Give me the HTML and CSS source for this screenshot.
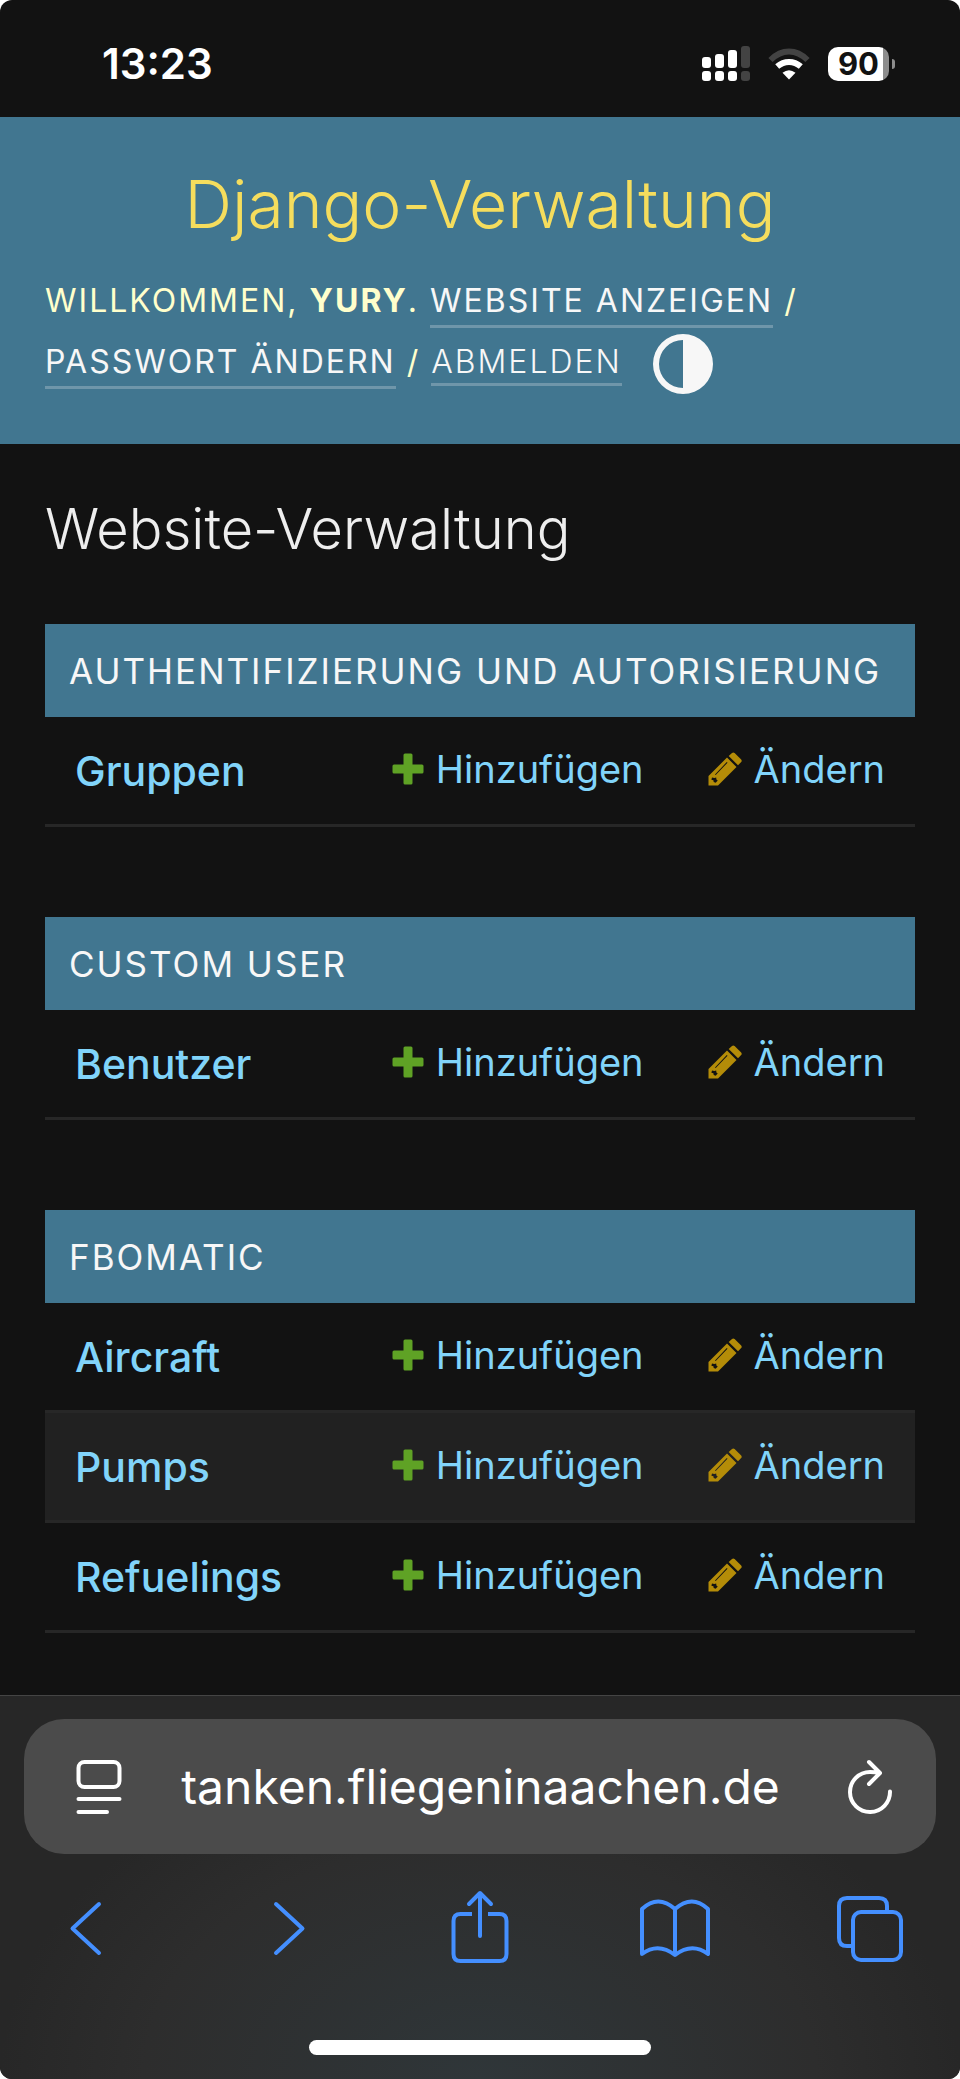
FILE: index.html
```html
<!DOCTYPE html>
<html lang="de">
<head>
<meta charset="utf-8">
<meta name="viewport" content="width=device-width, initial-scale=1">
<title>Website-Verwaltung | Django-Verwaltung</title>
<link rel="stylesheet" href="styles.css">
</head>
<body>
<svg class="sprite" aria-hidden="true">
  <symbol id="plus" viewBox="0 0 32 32">
    <path fill="#5fa225" d="M13 .5h6q1.500 0 1.500 1.500v9.500H30q1.500 0 1.500 1.500v6q0 1.500-1.500 1.500h-9.500V30q0 1.500-1.500 1.500h-6q-1.500 0-1.500-1.500v-9.500H2Q.5 20.500.5 19v-6q0-1.500 1.500-1.500h9.500V2Q11.500.5 13 .5z"/>
  </symbol>
  <symbol id="pencil" viewBox="0 0 34 34">
    <path fill="#b48c08" fill-rule="evenodd" d="M19 5.500l9.500 9.500L10 33.500H.5v-9.500zM18.800 10L7 22.400l.7.700L19.500 10.700zM4 25.400l-.6 2.400 2 .4.300 1.900 2 .6 2-2.200-1.300-.9-.2-2-1.900.4z"/>
    <path fill="#b48c08" d="M20.700 4L24 .9q1.300-1 2.600 0l6.600 6.600q1 1.300 0 2.600L30 13.300z"/>
  </symbol>
</svg>
<div class="phone">
  <div class="status">
    <time class="clock">13:23</time>
    <div class="indicators">
      <svg width="48" height="36" viewBox="0 0 48 36" role="img" aria-label="Signal">
        <g fill="#fff"><rect y="11" width="9" height="11" rx="3"/><rect x="13" y="8" width="9" height="14" rx="3"/><rect x="26" y="4" width="9" height="18" rx="3"/><rect y="25" width="9" height="10" rx="3"/><rect x="13" y="25" width="9" height="10" rx="3"/><rect x="26" y="25" width="9" height="10" rx="3"/></g>
        <g fill="#434343"><rect x="39" width="9" height="22" rx="3"/><rect x="39" y="25" width="9" height="10" rx="3"/></g>
      </svg>
      <svg class="wifi" width="42" height="32" viewBox="0 0 42 32" role="img" aria-label="WLAN">
        <path fill="none" stroke="#434343" stroke-width="6" d="M2.500 12Q11 3.500 21 3.500T39.500 12"/>
        <path fill="none" stroke="#fff" stroke-width="6" d="M9.200 18.600Q14.500 14 21 14t11.800 4.600"/>
        <path fill="#fff" d="M21 31.500l-6.500-6.700Q21 19.500 27.500 24.800z"/>
      </svg>
      <div class="battery"><span class="charge">90</span></div>
    </div>
  </div>

  <header class="header">
    <h1 class="site-name">Django-Verwaltung</h1>
    <div class="user-tools">
      Willkommen, <strong>Yury</strong>.
      <a href="#">Website anzeigen</a> /
      <a href="#">Passwort ändern</a> /
      <button class="logout" type="button">Abmelden</button>
      <button class="theme" type="button" aria-label="Farbschema wechseln">
        <svg width="60" height="60" viewBox="0 0 60 60"><path fill="#f7f7f7" fill-rule="evenodd" d="M30 0a30 30 0 0 1 0 60a30 30 0 0 1 0-60zM30 6a24 24 0 0 0 0 48z"/></svg>
      </button>
    </div>
  </header>

  <main class="content">
    <h2 class="page-title">Website-Verwaltung</h2>

    <table class="module">
      <caption>Authentifizierung und Autorisierung</caption>
      <tbody>
        <tr><th scope="row"><a href="#">Gruppen</a></th><td><a class="action" href="#"><svg class="plus"><use href="#plus"/></svg>Hinzufügen</a></td><td><a class="action" href="#"><svg class="pencil"><use href="#pencil"/></svg>Ändern</a></td></tr>
      </tbody>
    </table>

    <table class="module">
      <caption>Custom User</caption>
      <tbody>
        <tr><th scope="row"><a href="#">Benutzer</a></th><td><a class="action" href="#"><svg class="plus"><use href="#plus"/></svg>Hinzufügen</a></td><td><a class="action" href="#"><svg class="pencil"><use href="#pencil"/></svg>Ändern</a></td></tr>
      </tbody>
    </table>

    <table class="module">
      <caption>FBOmatic</caption>
      <tbody>
        <tr><th scope="row"><a href="#">Aircraft</a></th><td><a class="action" href="#"><svg class="plus"><use href="#plus"/></svg>Hinzufügen</a></td><td><a class="action" href="#"><svg class="pencil"><use href="#pencil"/></svg>Ändern</a></td></tr>
        <tr><th scope="row"><a href="#">Pumps</a></th><td><a class="action" href="#"><svg class="plus"><use href="#plus"/></svg>Hinzufügen</a></td><td><a class="action" href="#"><svg class="pencil"><use href="#pencil"/></svg>Ändern</a></td></tr>
        <tr><th scope="row"><a href="#">Refuelings</a></th><td><a class="action" href="#"><svg class="plus"><use href="#plus"/></svg>Hinzufügen</a></td><td><a class="action" href="#"><svg class="pencil"><use href="#pencil"/></svg>Ändern</a></td></tr>
      </tbody>
    </table>
  </main>

  <footer class="browser">
    <div class="address">
      <button class="icon" type="button" aria-label="Seitenmenü">
        <svg width="46" height="56" viewBox="0 0 46 56" fill="none" stroke="#fff" stroke-width="4" stroke-linecap="round"><rect x="2.500" y="3" width="41" height="25" rx="6"/><path d="M2.500 40h41M2.500 53H31"/></svg>
      </button>
      <button class="url" type="button">tanken.fliegeninaachen.de</button>
      <button class="icon" type="button" aria-label="Neu laden">
        <svg width="46" height="56" viewBox="0 0 46 56" fill="none" stroke="#fff" stroke-width="4" stroke-linecap="round" stroke-linejoin="round"><path d="M43 32.500A20 20 0 1 1 23 13q5 0 9 .8M22 3l11 11-11 11"/></svg>
      </button>
    </div>
    <nav class="toolbar" aria-label="Browser">
      <button class="icon" type="button" aria-label="Zurück"><svg width="72" height="74" viewBox="0 0 72 74"><path d="M50 14L23.500 38.500 50 63"/></svg></button>
      <button class="icon" type="button" aria-label="Vor"><svg width="72" height="74" viewBox="0 0 72 74"><path d="M31 14l26.500 24.500L31 63"/></svg></button>
      <button class="icon" type="button" aria-label="Teilen"><svg width="72" height="74" viewBox="0 0 72 74"><path stroke-linecap="butt" d="M30 24H18.500q-7 0-7 7v33q0 7 7 7h39q7 0 7-7V31q0-7-7-7H46"/><path d="M38 46V4M27 14L38 3l11 11"/></svg></button>
      <button class="icon" type="button" aria-label="Lesezeichen"><svg width="72" height="74" viewBox="0 0 72 74"><path d="M37 19v46M37 19Q20 4 4 19v45q16-12 33 1 17-13 33-1V19Q54 4 37 19z"/></svg></button>
      <button class="icon" type="button" aria-label="Tabs"><svg width="72" height="74" viewBox="0 0 72 74"><rect x="19" y="22" width="48" height="48" rx="8"/><path stroke-linecap="butt" d="M19 56h-6q-8 0-8-8V16q0-8 8-8h32q8 0 8 8v6"/></svg></button>
    </nav>
    <div class="home-bar"></div>
  </footer>
</div>
</body>
</html>
```
FILE: styles.css
```css
* { box-sizing: border-box; }
body { margin: 0; background: #fff; font-family: Inter, "Liberation Sans", sans-serif; }
a { color: inherit; text-decoration: none; }
button { margin: 0; padding: 0; border: 0; background: none; color: inherit; font: inherit; letter-spacing: inherit; text-transform: inherit; }
.sprite { display: none; }

.phone { display: flex; flex-direction: column; min-height: 100vh; border-radius: 12px; overflow: hidden; background: #121212; color: #eee; }

.status { display: flex; justify-content: space-between; align-items: center; padding: 39px 71px 28px 102px; color: #fff; }
.clock { font-size: 42px; line-height: 50px; font-weight: 600; }
.indicators { display: flex; align-items: center; gap: 18px; }
.indicators svg { display: block; }
.battery { position: relative; width: 61px; height: 34px; border-radius: 10px; background: linear-gradient(to right, #fff 55px, #8d8d8d 55px); }
.battery::after { content: ""; position: absolute; left: 64px; top: 12px; width: 3px; height: 10px; border-radius: 0 4px 4px 0; background: #8d8d8d; }
.charge { display: block; text-align: center; font-size: 31px; line-height: 34px; font-weight: 700; color: #121212; }

.header { padding: 47px 45px 50px; background: #417690; color: #ffc; }
.site-name { margin: 0 0 26px; font-size: 66px; line-height: 80px; font-weight: 300; text-align: center; color: #f5dd5d; }
.user-tools { font-size: 32px; line-height: 61px; letter-spacing: 2px; text-transform: uppercase; }
.user-tools a, .logout { color: #f7f7f7; border-bottom: 3px solid #6f96aa; }
.user-tools a { padding-bottom: 5px; }
.logout { line-height: 43px; font-weight: 300; }
.theme { margin-left: 20px; vertical-align: middle; height: 60px; line-height: 0; }

.content { flex: 1; padding: 45px 45px 60px; }
.page-title { margin: 0 0 55px; font-size: 56px; line-height: 80px; font-weight: 300; }
.module { width: 100%; margin-bottom: 90px; border-collapse: separate; border-spacing: 0; }
.module:last-child { margin-bottom: 0; }
.module caption { padding: 25px 24px 23px; background: #417690; color: #f7f7f7; font-size: 35px; line-height: 45px; letter-spacing: 2px; text-align: left; text-transform: uppercase; }
.module th, .module td { height: 110px; padding: 0 30px; border-bottom: 3px solid #272727; white-space: nowrap; text-align: left; color: #81d4fa; }
.module th { width: 100%; font-size: 41px; font-weight: 500; }
.module td { padding: 0 30px 4px 34px; font-size: 38px; }
.module tr:nth-child(even) { background: #212121; }
.action { display: flex; align-items: center; gap: 12px; }
.plus { width: 32px; height: 32px; }
.pencil { width: 34px; height: 34px; }

.browser { padding: 23px 24px 24px; border-top: 1px solid #444; background: radial-gradient(ellipse 480px 340px at 50% 100%, #2f3639, #2d2d2d 70%, transparent), #272727; }
.address { display: flex; align-items: center; justify-content: space-between; height: 135px; padding: 0 43px 0 52px; border-radius: 40px; background: #4b4b4b; color: #fff; }
.url { flex: 1; padding-right: 8px; font-size: 48px; line-height: 60px; }
.icon { display: block; line-height: 0; }
.toolbar { display: flex; justify-content: space-between; margin-top: 36px; padding: 0 30px 0 25px; }
.toolbar svg { fill: none; stroke: #448fff; stroke-width: 4; stroke-linecap: round; stroke-linejoin: round; }
.home-bar { width: 342px; height: 15px; margin: 76px auto 0; border-radius: 8px; background: #fff; }
```
